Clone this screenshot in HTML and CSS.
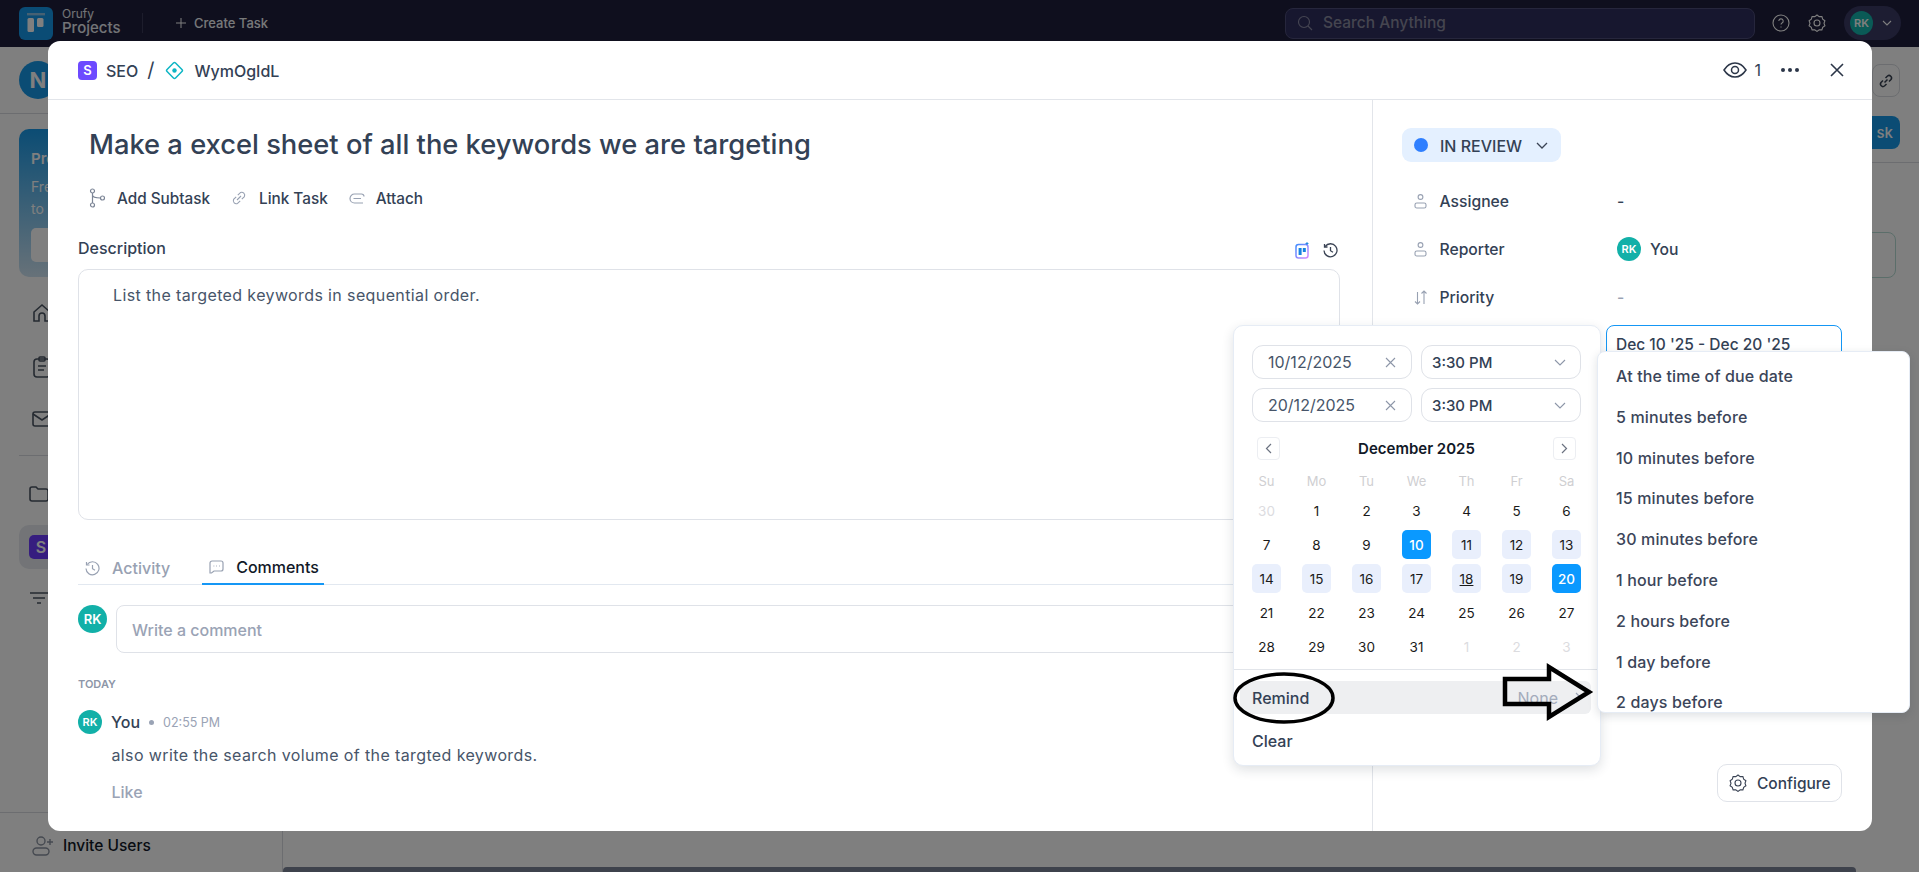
FILE: index.html
```html
<!DOCTYPE html>
<html lang="en">
<head>
<meta charset="utf-8">
<title>Orufy Projects</title>
<link rel="stylesheet" href="styles.css">
</head>
<body>
<div class="app">
  <header class="topbar">
    <div class="logo"><svg width="24" height="24" viewBox="0 0 24 24"><rect x="3" y="2" width="18" height="2.4" fill="#8cc3e6"/><rect x="3.5" y="7" width="6.5" height="14" rx="1.5" fill="#fff"/><rect x="13" y="7" width="6.5" height="9" rx="1.5" fill="#fff"/></svg></div>
    <div class="brand"><span class="brand-sm">Orufy</span><span class="brand-lg">Projects</span></div>
    <span class="vr"></span>
    <div class="create"><svg width="12" height="12" viewBox="0 0 12 12" fill="none" stroke="#fff" stroke-width="1"><path d="M6 1v10M1 6h10"/></svg><span>Create Task</span></div>
    <div class="search"><svg width="16" height="16" viewBox="0 0 16 16" fill="none" stroke="#8b8ba5" stroke-width="1.1"><circle cx="7" cy="7" r="5.5"/><path d="M11 11l4 4"/></svg><span>Search Anything</span></div>
    <svg class="t-help" width="18" height="18" viewBox="0 0 18 18" fill="none" stroke="#fff" stroke-width="1.1"><circle cx="9" cy="9" r="8"/><path d="M6.8 7a2.2 2.2 0 1 1 3.2 2c-.7.4-1 .8-1 1.6"/><path d="M9 12.6v.8"/></svg>
    <svg class="t-gear" width="18" height="18" viewBox="0 0 18 18" fill="none" stroke="#fff" stroke-width="1.1"><path d="M9 1l2.2 1.6 2.7-.1.8 2.6 2.2 1.6-.9 2.5.9 2.5-2.2 1.6-.8 2.6-2.7-.1L9 17.4l-2.2-1.6-2.7.1-.8-2.6-2.2-1.6.9-2.5-.9-2.5 2.2-1.6.8-2.6 2.7.1z"/><circle cx="9" cy="9" r="3"/></svg>
    <div class="user-pill"><span class="t-avatar">RK</span><svg width="10" height="6" viewBox="0 0 10 6" fill="none" stroke="#fff" stroke-width="1.1"><path d="M1 1l4 4 4-4"/></svg></div>
  </header>

  <div class="page">
    <aside class="sidebar">
      <div class="side-top"><span class="side-logo">N</span></div>
      <div class="promo"><b>Projects</b><p>Free plan<br>to upgrade</p><span class="promo-btn"></span></div>
      <nav class="side-nav">
        <svg width="20" height="20" viewBox="0 0 20 20" fill="none" stroke="#4b5563" stroke-width="1.6"><path d="M2 9l8-7 8 7v9h-5v-5a3 3 0 0 0-6 0v5H2z"/></svg>
        <svg width="20" height="22" viewBox="0 0 20 22" fill="none" stroke="#4b5563" stroke-width="1.6"><rect x="2" y="3" width="16" height="18" rx="3"/><rect x="7" y="1" width="6" height="4" rx="1"/><path d="M6 10h8M6 14h6"/></svg>
        <svg width="20" height="16" viewBox="0 0 20 16" fill="none" stroke="#4b5563" stroke-width="1.6"><rect x="1" y="1" width="18" height="14" rx="2"/><path d="M1 3l9 6 9-6"/></svg>
      </nav>
      <hr class="side-rule">
      <svg class="side-folder" width="20" height="16" viewBox="0 0 20 16" fill="none" stroke="#4b5563" stroke-width="1.6"><path d="M1 3a2 2 0 0 1 2-2h4l2 2h8a2 2 0 0 1 2 2v8a2 2 0 0 1-2 2H3a2 2 0 0 1-2-2z"/></svg>
      <div class="side-project"><span class="side-s">S</span></div>
      <svg class="side-filter" width="20" height="12" viewBox="0 0 20 12" fill="none" stroke="#4b5563" stroke-width="1.6"><path d="M1 1h18M4 6h12M8 11h4"/></svg>
      <div class="invite"><svg width="22" height="20" viewBox="0 0 22 20" fill="none" stroke="#8b93a1" stroke-width="1.4"><circle cx="9" cy="5" r="4"/><rect x="1" y="12" width="16" height="7" rx="3.5"/><path d="M18 3v6M15 6h6"/></svg><span>Invite Users</span></div>
    </aside>
    <main class="behind">
      <div class="behind-top"><span class="link-btn"><svg width="16" height="16" viewBox="0 0 16 16" fill="none" stroke="#374151" stroke-width="1.5"><path d="M6.5 9.5l3-3M5 7.5l-2 2a2.5 2.5 0 0 0 3.5 3.5l2-2M11 8.5l2-2A2.5 2.5 0 0 0 9.5 3l-2 2"/></svg></span></div>
      <div class="behind-bar"><span class="task-btn">sk</span></div>
      <div class="behind-card"></div>
      <div class="hscroll"></div>
    </main>
  </div>

  <div class="overlay"></div>

  <section class="modal">
    <header class="modal-head">
      <span class="crumb-s">S</span>
      <span class="crumb">SEO</span>
      <span class="crumb-sep">/</span>
      <svg class="crumb-icon" width="19" height="19" viewBox="0 0 19 19" fill="none" stroke="#0db5c4" stroke-width="1.5"><rect x="3.5" y="3.5" width="12" height="12" rx="1.5" transform="rotate(45 9.5 9.5)"/><circle cx="9.5" cy="9.5" r="2.2" fill="#0db5c4" stroke="none"/></svg>
      <span class="crumb">WymOgIdL</span>
      <div class="head-tools">
        <svg width="24" height="16" viewBox="0 0 24 16" fill="none" stroke="#2c3648" stroke-width="1.5"><path d="M1 8c3-4.7 6.7-7 11-7s8 2.3 11 7c-3 4.7-6.700 7-11 7S4 12.700 1 8z"/><circle cx="12" cy="8" r="3.5"/></svg>
        <span class="watch">1</span>
        <svg class="dots" width="20" height="6" viewBox="0 0 20 6" fill="#2c3648"><circle cx="3" cy="3" r="2"/><circle cx="10" cy="3" r="2"/><circle cx="17" cy="3" r="2"/></svg>
        <svg class="close" width="14" height="14" viewBox="0 0 14 14" fill="none" stroke="#2c3648" stroke-width="1.6"><path d="M1 1l12 12M13 1L1 13"/></svg>
      </div>
    </header>
    <div class="modal-body">
      <div class="left">
        <h1 class="title">Make a excel sheet of all the keywords we are targeting</h1>
        <div class="actions">
          <span class="action"><svg width="16" height="20" viewBox="0 0 16 20" fill="none" stroke="#7c8596" stroke-width="1.2"><circle cx="3.5" cy="3" r="2"/><circle cx="3.5" cy="17" r="2"/><circle cx="13.5" cy="10" r="2"/><path d="M3.5 5v10M3.5 7c0 2 2 3 8 3"/></svg>Add Subtask</span>
          <span class="action"><svg width="16" height="16" viewBox="0 0 16 16" fill="none" stroke="#98a1b2" stroke-width="1.1"><path d="M6 10l4-4M5.2 6.800L2.600 9.400a3 3 0 0 0 4 4l2.600-2.600M10.800 9.200l2.600-2.600a3 3 0 0 0-4-4L6.800 5.200"/></svg>Link Task</span>
          <span class="action action-clip"><svg width="16" height="11" viewBox="0 0 16 11" fill="none" stroke="#98a1b2" stroke-width="1.2"><path d="M15 3.500A2.500 2.500 0 0 0 12.500 1H5.500a4.500 4.500 0 0 0 0 9H14M4.500 5.500H12"/></svg>Attach</span>
        </div>
        <div class="desc-head">
          <span class="desc-label">Description</span>
          <div class="desc-tools">
            <svg width="15" height="17" viewBox="0 0 15 17" fill="none"><defs><linearGradient id="aiEdge" x1="0" y1="0" x2="1" y2="1"><stop offset="0" stop-color="#3f8cff"/><stop offset="1" stop-color="#d78bff"/></linearGradient></defs><rect x="1" y="2.500" width="12" height="13.500" rx="2.500" stroke="url(#aiEdge)" stroke-width="1.5"/><rect x="3.600" y="6" width="3" height="7" fill="#1783e0"/><rect x="7.800" y="6" width="3" height="4" fill="#1783e0"/><path d="M12 0v3M10.500 1.500h3" stroke="#1783e0" stroke-width=".9"/></svg>
            <svg width="15" height="15" viewBox="0 0 15 15" fill="none" stroke="#3a4354" stroke-width="1.3"><path d="M2.200 3.500A6.500 6.500 0 1 1 1 7.500"/><path d="M1.500 1v3h3M7.500 4v3.700l2.500 1.500"/></svg>
          </div>
        </div>
        <div class="desc-box">List the targeted keywords in sequential order.</div>
        <div class="tabs">
          <span class="tab"><svg width="15" height="15" viewBox="0 0 15 15" fill="none" stroke="#98a1b2" stroke-width="1.2"><path d="M2.200 3.500A6.500 6.500 0 1 1 1 7.500"/><path d="M1.500 1v3h3M7.500 4v3.700l2.500 1.500"/></svg>Activity</span>
          <span class="tab tab-on"><svg width="15" height="14" viewBox="0 0 15 14" fill="none" stroke="#98a1b2" stroke-width="1.2"><path d="M1 3a2 2 0 0 1 2-2h9a2 2 0 0 1 2 2v6a2 2 0 0 1-2 2H5l-2.500 2H1z"/><path d="M4.500 6h.8M7.200 6H8M10 6h.8"/></svg>Comments</span>
        </div>
        <div class="write">
          <span class="avatar av-lg">RK</span>
          <div class="write-box">Write a comment</div>
        </div>
        <div class="today">TODAY</div>
        <div class="c-head"><span class="avatar av-sm">RK</span><span class="c-name">You</span><span class="c-dot"></span><span class="c-time">02:55 PM</span></div>
        <p class="c-text">also write the search volume of the targted keywords.</p>
        <div class="c-like">Like</div>
      </div>
      <div class="right">
        <div class="status"><span class="status-dot"></span><span>IN REVIEW</span><svg width="12" height="7" viewBox="0 0 12 7" fill="none" stroke="#3a4354" stroke-width="1.3"><path d="M1 1l5 5 5-5"/></svg></div>
        <div class="fields">
          <div class="field"><span class="f-label"><svg width="13" height="15" viewBox="0 0 13 15" fill="none" stroke="#98a1b2" stroke-width="1.1"><circle cx="6.500" cy="3" r="2.400"/><rect x="1" y="9" width="11" height="5" rx="1.800"/></svg>Assignee</span><span class="f-value">-</span></div>
          <div class="field"><span class="f-label"><svg width="13" height="15" viewBox="0 0 13 15" fill="none" stroke="#98a1b2" stroke-width="1.1"><circle cx="6.500" cy="3" r="2.400"/><rect x="1" y="9" width="11" height="5" rx="1.800"/></svg>Reporter</span><span class="f-value"><span class="avatar av-sm">RK</span>You</span></div>
          <div class="field"><span class="f-label"><svg width="13" height="15" viewBox="0 0 13 15" fill="none" stroke="#98a1b2" stroke-width="1.1"><path d="M3.500 2v12M1 11.500L3.500 14 6 11.500M10 14V1M7.500 3.500L10 1l2.500 2.500"/></svg>Priority</span><span class="f-value muted">-</span></div>
          <div class="field"><span class="f-label"></span><span class="date-field">Dec 10 '25 - Dec 20 '25</span></div>
        </div>
        <button class="configure"><svg width="18" height="18" viewBox="0 0 18 18" fill="none" stroke="#3a4354" stroke-width="1.1"><path d="M9 1l2.200 1.600 2.700-.1.8 2.600 2.200 1.600-.9 2.500.9 2.500-2.200 1.600-.8 2.600-2.700-.1L9 17.400l-2.200-1.600-2.700.1-.8-2.600-2.200-1.600.9-2.500-.9-2.500 2.200-1.600.8-2.600 2.700.1z"/><circle cx="9" cy="9" r="3"/></svg>Configure</button>
      </div>
    </div>
  </section>

  <section class="calendar">
    <div class="dt-row">
      <div class="dt-input"><span>10/12/2025</span><svg width="11" height="11" viewBox="0 0 11 11" fill="none" stroke="#8d96a8" stroke-width="1.1"><path d="M1 1l9 9M10 1l-9 9"/></svg></div>
      <div class="dt-time"><span>3:30 PM</span><svg width="12" height="7" viewBox="0 0 12 7" fill="none" stroke="#8d96a8" stroke-width="1.1"><path d="M1 1l5 5 5-5"/></svg></div>
    </div>
    <div class="dt-row">
      <div class="dt-input"><span>20/12/2025</span><svg width="11" height="11" viewBox="0 0 11 11" fill="none" stroke="#8d96a8" stroke-width="1.1"><path d="M1 1l9 9M10 1l-9 9"/></svg></div>
      <div class="dt-time"><span>3:30 PM</span><svg width="12" height="7" viewBox="0 0 12 7" fill="none" stroke="#8d96a8" stroke-width="1.1"><path d="M1 1l5 5 5-5"/></svg></div>
    </div>
    <div class="month">
      <span class="nav-btn"><svg width="7" height="11" viewBox="0 0 7 11" fill="none" stroke="#6b7280" stroke-width="1.2"><path d="M6 1L1.500 5.500 6 10"/></svg></span>
      <span class="month-name">December 2025</span>
      <span class="nav-btn"><svg width="7" height="11" viewBox="0 0 7 11" fill="none" stroke="#6b7280" stroke-width="1.2"><path d="M1 1l4.500 4.500L1 10"/></svg></span>
    </div>
    <div class="weekdays"><span>Su</span><span>Mo</span><span>Tu</span><span>We</span><span>Th</span><span>Fr</span><span>Sa</span></div>
    <div class="days">
      <span class="d out">30</span><span class="d">1</span><span class="d">2</span><span class="d">3</span><span class="d">4</span><span class="d">5</span><span class="d">6</span>
      <span class="d">7</span><span class="d">8</span><span class="d">9</span><span class="d edge">10</span><span class="d mid">11</span><span class="d mid">12</span><span class="d mid">13</span>
      <span class="d mid">14</span><span class="d mid">15</span><span class="d mid">16</span><span class="d mid">17</span><span class="d mid now">18</span><span class="d mid">19</span><span class="d edge">20</span>
      <span class="d">21</span><span class="d">22</span><span class="d">23</span><span class="d">24</span><span class="d">25</span><span class="d">26</span><span class="d">27</span>
      <span class="d">28</span><span class="d">29</span><span class="d">30</span><span class="d">31</span><span class="d out">1</span><span class="d out">2</span><span class="d out">3</span>
    </div>
    <div class="cal-foot">
      <div class="remind"><span>Remind</span><span class="remind-val">None<svg width="7" height="11" viewBox="0 0 7 11" fill="none" stroke="#9aa3b5" stroke-width="1.2"><path d="M1 1l4.500 4.500L1 10"/></svg></span></div>
      <div class="clear">Clear</div>
    </div>
  </section>

  <section class="reminders">
    <div class="r-item">At the time of due date</div>
    <div class="r-item">5 minutes before</div>
    <div class="r-item">10 minutes before</div>
    <div class="r-item">15 minutes before</div>
    <div class="r-item">30 minutes before</div>
    <div class="r-item">1 hour before</div>
    <div class="r-item">2 hours before</div>
    <div class="r-item">1 day before</div>
    <div class="r-item">2 days before</div>
  </section>

  <svg class="marks" width="1919" height="872" viewBox="0 0 1919 872" fill="none" stroke="#000">
    <ellipse cx="1284" cy="698" rx="49" ry="24" stroke-width="3.5"/>
    <path d="M1505 679H1549V667L1589 692 1549 717V704H1505Z" stroke-width="4.5"/>
  </svg>
</div>
</body>
</html>
```
FILE: styles.css
```css
* { box-sizing: border-box; }
html, body { margin: 0; height: 100%; overflow: hidden; }
body { font-family: Inter, "Liberation Sans", sans-serif; color: #334155; background: #fff; }
.app { position: relative; width: 1919px; height: 872px; overflow: hidden; display: flex; flex-direction: column; }

/* top bar */
.topbar { flex: none; height: 47px; background: #1e1e3c; display: flex; align-items: center; padding: 0 0 1px 19px; color: #fff; }
.logo { width: 34px; height: 33px; border-radius: 6px; background: #1498ea; display: flex; align-items: center; justify-content: center; }
.brand { display: flex; flex-direction: column; margin-left: 9px; padding-bottom: 4px; width: 71px; line-height: 14px; color: #e6e8ee; }
.brand-sm { font-size: 12px; }
.brand-lg { font-size: 15px; font-weight: 500; }
.vr { width: 1px; height: 20px; background: #3a3a58; margin-left: 9px; }
.create { display: flex; align-items: center; gap: 7px; margin-left: 32px; padding-bottom: 1px; font-size: 13px; font-weight: 500; color: #f0f2f5; }
.search { display: flex; align-items: center; gap: 10px; margin-left: 1017px; width: 470px; height: 31px; padding: 0 0 1px 11px; background: #2f2f5e; border: 1px solid #4c4c78; border-radius: 8px; font-size: 15.5px; font-weight: 500; color: #8a8ba0; }
.t-help { margin-left: 17px; }
.t-gear { margin-left: 18px; }
.user-pill { display: flex; align-items: center; gap: 9px; width: 57px; height: 34px; margin-left: 18px; padding-left: 6px; border-radius: 17px; background: #3a3a64; }
.t-avatar { width: 23px; height: 24px; border-radius: 50%; background: #14b5ac; display: flex; align-items: center; justify-content: center; font-size: 11px; font-weight: 600; }

/* page behind the dialog */
.page { flex: 1; display: flex; min-height: 0; }
.sidebar { flex: none; width: 283px; border-right: 1px solid #d8dbe0; position: relative; padding-top: 14px; }
.side-top { height: 53px; padding-left: 19px; border-bottom: 1px solid #d8dbe0; }
.side-logo { display: flex; width: 38px; height: 38px; border-radius: 50%; background: #1799e8; color: #fff; font-size: 22px; font-weight: 700; align-items: center; justify-content: center; }
.promo { margin: 15px 19px 0; height: 148px; border-radius: 10px; padding: 20px 12px; background: linear-gradient(#1799e8, #cfe4f2); color: #fff; font-size: 14px; }
.promo b { font-size: 15px; font-weight: 600; }
.promo p { margin: 8px 0; line-height: 22px; }
.promo-btn { display: block; height: 34px; background: #fff; border-radius: 5px; }
.side-nav { margin-top: 26px; padding-left: 32px; display: flex; flex-direction: column; gap: 33px; align-items: flex-start; }
.side-rule { margin: 28px 0 0 19px; border: 0; border-top: 1px solid #d8dbe0; }
.side-folder { display: block; margin: 30px 0 0 29px; }
.side-project { margin: 23px 19px 0; height: 44px; border-radius: 10px; background: #e6e9ef; padding: 10px; }
.side-s { display: flex; width: 24px; height: 24px; border-radius: 5px; background: #6d3bff; color: #fff; font-weight: 600; font-size: 16px; align-items: center; justify-content: center; }
.side-filter { display: block; margin: 23px 0 0 29px; }
.invite { position: absolute; left: 0; right: 0; bottom: 0; height: 60px; padding: 22px 0 0 32px; border-top: 1px solid #d8dbe0; display: flex; gap: 9px; font-size: 15.5px; font-weight: 500; color: #111827; }
.invite span { line-height: 22px; }
.invite svg { margin-top: 1px; }
.behind { flex: 1; position: relative; display: flex; flex-direction: column; }
.behind-top { height: 69px; display: flex; justify-content: flex-end; padding: 17px 19px 0 0; }
.link-btn { width: 28px; height: 33px; border: 1px solid #d8dbe0; border-radius: 8px; display: flex; align-items: center; justify-content: center; }
.behind-bar { height: 47px; display: flex; justify-content: flex-end; border-bottom: 1px solid #d8dbe0; padding-right: 19px; }
.task-btn { width: 60px; height: 33px; border-radius: 8px; background: #1799e8; color: #fff; text-align: right; padding-right: 7px; font-size: 15px; font-weight: 500; line-height: 33px; }
.behind-card { align-self: flex-end; width: 60px; height: 46px; margin: 69px 23px 0 0; border: 1px solid #b6dcd4; border-radius: 8px; }
.hscroll { position: absolute; left: 0; right: 63px; bottom: 0; height: 5px; border-radius: 4px 4px 0 0; background: #7d8598; }
.overlay { position: absolute; inset: 0; background: rgba(0, 0, 0, .5); }

/* dialog */
.modal { position: absolute; left: 48px; top: 41px; width: 1824px; height: 790px; background: #fff; border-radius: 12px; display: flex; flex-direction: column; color: #334155; }
.modal-head { flex: none; height: 59px; border-bottom: 1px solid #e2e5ea; display: flex; align-items: center; padding: 0 28px 0 30px; }
.crumb-s { width: 19px; height: 19px; border-radius: 4px; background: #6d4aff; color: #fff; font-size: 13px; font-weight: 600; display: flex; align-items: center; justify-content: center; margin-right: 9px; }
.crumb { padding-top: 1px; font-size: 16px; font-weight: 500; }
.crumb-sep { margin: 0 11px 0 9px; font-size: 20px; font-weight: 400; }
.crumb-icon { margin-right: 10px; }
.head-tools { margin-left: auto; display: flex; align-items: center; }
.watch { margin-left: 7px; font-size: 16px; font-weight: 400; }
.dots { margin-left: 19px; }
.close { margin-left: 30px; }
.modal-body { flex: 1; display: flex; min-height: 0; }
.left { width: 1325px; flex: none; border-right: 1px solid #e2e5ea; padding: 27px 32px 0 30px; }
.title { margin: 0 0 0 11px; font-size: 27.3px; line-height: 36px; font-weight: 500; }
.actions { display: flex; gap: 21px; margin: 24px 0 0 11px; height: 22px; }
.action { display: flex; align-items: center; gap: 12px; font-size: 15.3px; font-weight: 500; }
.action-clip { gap: 11px; }
.desc-head { display: flex; justify-content: space-between; align-items: center; margin-top: 28px; height: 22px; }
.desc-label { font-size: 16px; font-weight: 500; }
.desc-tools { display: flex; gap: 13px; align-items: center; margin: 5px 2px 0 0; }
.desc-box { height: 251px; margin-top: 10px; border: 1px solid #dfe2e8; border-radius: 10px; padding: 15px 34px; font-size: 16px; letter-spacing: .38px; line-height: 20px; color: #475569; }
.tabs { margin-top: 29px; height: 36px; display: flex; border-bottom: 1px solid #e2e8f0; }
.tab { display: flex; align-items: center; gap: 12px; padding: 2px 7px 0; height: 36px; margin-right: 25px; font-size: 16px; font-weight: 500; color: #98a1b2; }
.tab-on { color: #111827; border-bottom: 2px solid #1597f5; margin-right: 0; padding: 2px 5px 0 7px; }
.write { display: flex; gap: 9px; margin-top: 20px; }
.avatar { flex: none; display: inline-flex; align-items: center; justify-content: center; border-radius: 50%; background: #12b0a8; color: #fff; font-weight: 600; }
.av-lg { width: 29px; height: 28px; font-size: 13px; }
.av-sm { width: 24px; height: 24px; font-size: 11px; }
.write-box { flex: 1; height: 48px; border: 1px solid #dfe2e8; border-radius: 8px; padding-left: 15px; font-size: 16px; font-weight: 500; line-height: 48px; color: #9aa3b5; }
.today { margin-top: 24px; font-size: 11px; line-height: 14px; font-weight: 600; color: #8d96a8; }
.c-head { display: flex; align-items: center; margin-top: 19px; height: 24px; }
.c-name { margin-left: 9px; font-size: 16px; font-weight: 500; }
.c-dot { width: 5px; height: 5px; border-radius: 50%; background: #9aa3b5; margin: 0 9px; }
.c-time { font-size: 12.5px; color: #9aa3b5; }
.c-text { margin: 10px 0 0 33.5px; font-size: 16px; letter-spacing: .38px; line-height: 22px; color: #475569; }
.c-like { margin: 15px 0 0 33.5px; font-size: 16px; line-height: 22px; font-weight: 500; color: #9aa3b5; }
.right { flex: 1; display: flex; flex-direction: column; padding: 28px 30px 29px 29px; }
.status { display: flex; align-items: center; width: 159px; height: 34px; background: #e4f0ff; border-radius: 9px; padding: 1px 0 0 12px; font-size: 16px; font-weight: 500; }
.status-dot { width: 14px; height: 14px; border-radius: 50%; background: #2f7fff; margin: -1px 12px 0 0; }
.status svg { margin-left: 14px; }
.fields { margin-top: 15px; }
.field { display: grid; grid-template-columns: 215px 1fr; align-items: center; height: 48px; }
.f-label { display: flex; align-items: center; gap: 12.5px; padding-left: 12px; font-size: 15.7px; font-weight: 500; }
.f-value { display: flex; align-items: center; gap: 9px; font-size: 15.7px; font-weight: 500; }
.muted { color: #98a1b2; }
.date-field { margin-left: -11px; height: 40px; border: 1px solid #1597f5; border-radius: 8px; padding-left: 9px; line-height: 38px; font-size: 15.5px; font-weight: 500; }
.configure { margin-top: auto; align-self: flex-end; display: flex; align-items: center; gap: 10px; width: 125px; height: 38px; padding: 0 0 0 11px; background: #fff; border: 1px solid #e0e3e9; border-radius: 10px; font: 500 15.5px Inter, sans-serif; color: #334155; }

/* date popover */
.calendar { position: absolute; left: 1233px; top: 325px; width: 368px; height: 441px; background: #fff; border: 1px solid #e6ecf5; border-radius: 10px; box-shadow: 0 4px 12px rgba(30, 41, 59, .14); padding-top: 19px; }
.dt-row { display: grid; grid-template-columns: 1fr 1fr; gap: 9px; margin: 0 19px 9px 18px; }
.dt-input, .dt-time { height: 34px; border: 1px solid #dfe2e8; border-radius: 11px; display: flex; align-items: center; justify-content: space-between; }
.dt-input { padding: 0 15px; font-size: 16px; color: #475569; }
.dt-time { padding: 0 14px 0 10px; font-size: 15px; font-weight: 500; }
.month { display: flex; align-items: center; justify-content: space-between; margin: 15px 24px 0 23px; height: 23px; }
.nav-btn { width: 23px; height: 23px; border: 1px solid #eceef2; border-radius: 4px; display: flex; align-items: center; justify-content: center; }
.month-name { font-size: 15px; font-weight: 600; color: #111827; }
.weekdays, .days { display: grid; grid-template-columns: repeat(7, 29px); justify-content: space-between; margin: 0 19px 0 18px; text-align: center; }
.weekdays { margin-top: 11px; height: 20px; font-size: 13px; line-height: 20px; color: #cfcfd2; }
.days { margin-top: 5px; grid-auto-rows: 29px; row-gap: 5px; }
.d { display: flex; align-items: center; justify-content: center; border-radius: 5px; font-size: 13.5px; color: #1a1a1a; }
.d.out { color: #dcdcdf; }
.d.mid { background: #e9effc; }
.d.edge { background: #0a99ff; color: #fff; font-weight: 500; }
.d.now { text-decoration: underline; }
.cal-foot { margin-top: 8px; padding: 11px 9px 0 6px; border-top: 1px solid #e2e5ea; }
.remind { display: flex; align-items: center; justify-content: space-between; height: 33px; background: #eeeff1; border-radius: 6px; padding: 0 9px 0 12px; font-size: 16px; font-weight: 500; }
.remind-val { display: flex; align-items: center; gap: 17px; color: #a3abbb; font-size: 16px; font-weight: 400; }
.clear { height: 33px; margin-top: 11px; padding-left: 12px; font-size: 16px; font-weight: 500; line-height: 33px; }

/* reminder options */
.reminders { position: absolute; left: 1597px; top: 351px; width: 313px; height: 362px; background: #fff; border: 1px solid #e6ecf5; border-radius: 8px; box-shadow: 0 3px 10px rgba(30, 41, 59, .14); overflow: hidden; padding: 4px 0 0 18px; font-size: 16px; letter-spacing: .15px; font-weight: 500; color: #3b4559; }
.r-item { height: 40.8px; line-height: 40.8px; white-space: nowrap; }
.marks { position: absolute; left: 0; top: 0; pointer-events: none; }
```
